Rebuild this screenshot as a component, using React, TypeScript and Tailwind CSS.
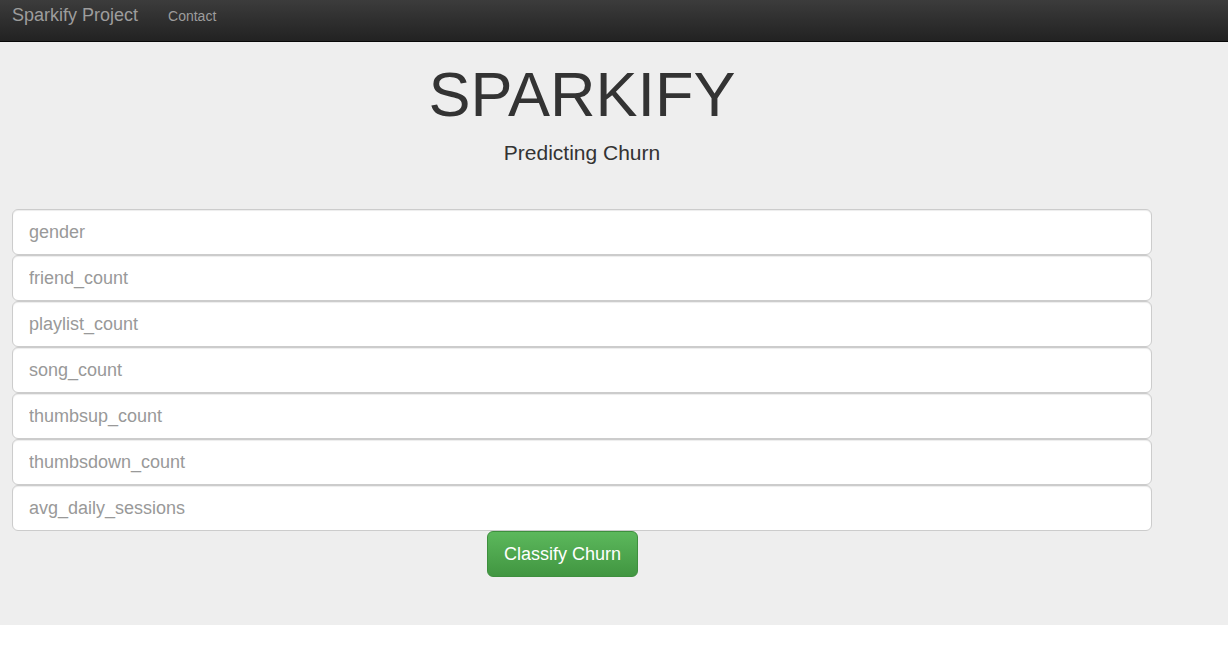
const fields = [
  'gender',
  'friend_count',
  'playlist_count',
  'song_count',
  'thumbsup_count',
  'thumbsdown_count',
  'avg_daily_sessions',
];

export default function App() {
  return (
    <div className="min-h-screen bg-white text-[14px] text-[#333] [font-family:'Liberation_Sans',Arial,sans-serif]">
      {/* navbar */}
      <nav className="flex h-[42px] items-start border-b border-[#080808] bg-gradient-to-b from-[#3c3c3c] to-[#222222] pt-[5px]">
        <a href="#" className="ml-[12px] text-[18px] leading-[20px] text-[#9d9d9d]">
          Sparkify Project
        </a>
        <a href="#" className="ml-[30px] pt-[1px] text-[14px] leading-[20px] text-[#9d9d9d]">
          Contact
        </a>
      </nav>

      {/* jumbotron */}
      <div className="bg-[#eeeeee] pb-[48px]">
        <div className="ml-[12px] w-[1140px]">
          <h1 className="pt-[18px] text-center text-[63px] leading-[1.1] text-[#333]">SPARKIFY</h1>
          <p className="mt-[9px] text-center text-[21px] font-[200] leading-[30px] text-[#333]">
            Predicting Churn
          </p>

          <form className="mt-[41px]" onSubmit={(e) => e.preventDefault()}>
            {fields.map((f) => (
              <input
                key={f}
                type="text"
                placeholder={f}
                className="block h-[46px] w-full rounded-[6px] border border-[#cccccc] bg-white px-[16px] text-[18px] text-[#555] shadow-[inset_0_1px_1px_rgba(0,0,0,0.075)] outline-none placeholder:text-[#999]"
              />
            ))}
            <button
              type="submit"
              className="ml-[475px] block h-[46px] rounded-[6px] border border-[#3e8f3e] bg-gradient-to-b from-[#5cb85c] to-[#419641] px-[16px] text-[18px] leading-[24px] text-white"
            >
              Classify Churn
            </button>
          </form>
        </div>
      </div>
    </div>
  );
}
